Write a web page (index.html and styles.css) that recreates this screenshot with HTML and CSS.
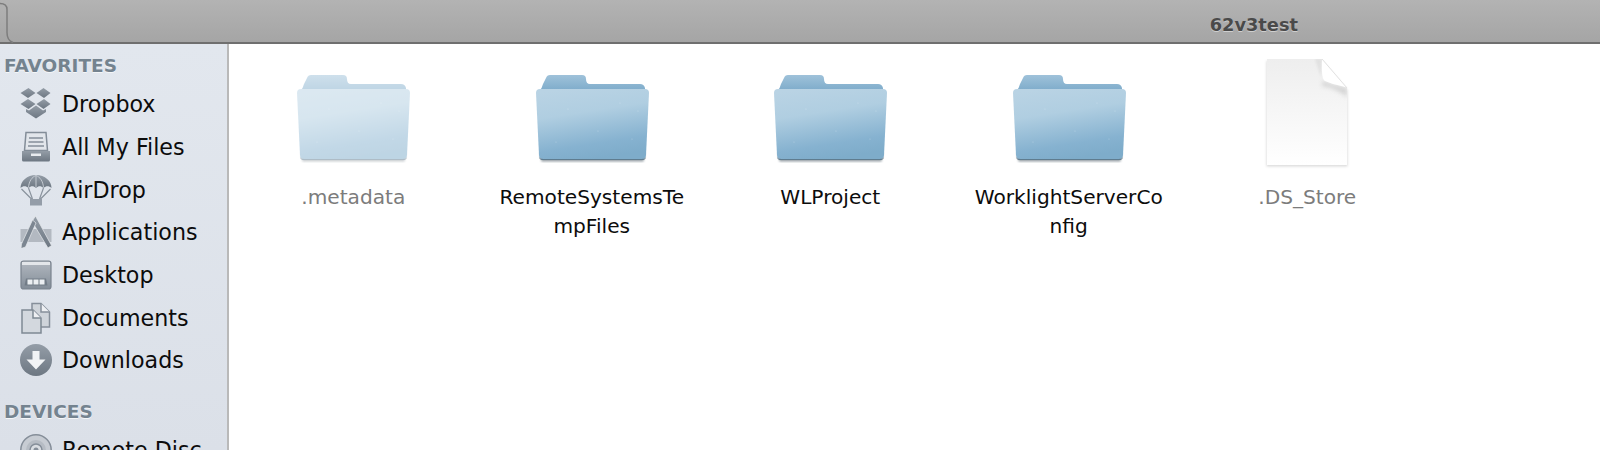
FILE: index.html
```html
<!DOCTYPE html>
<html lang="en">
<head>
<meta charset="utf-8">
<title>62v3test</title>
<link rel="stylesheet" href="styles.css">
</head>
<body>
<svg class="defs" width="0" height="0" aria-hidden="true">
  <defs>
    <linearGradient id="g-icon" x1="0" y1="0" x2="0" y2="1"><stop offset="0" stop-color="#949da7"/><stop offset="1" stop-color="#6d7782"/></linearGradient>
    <linearGradient id="g-desk" x1="0" y1="0" x2="0" y2="1"><stop offset="0" stop-color="#b2b8c0"/><stop offset="1" stop-color="#838d98"/></linearGradient>
    <linearGradient id="g-front" x1="0.25" y1="0" x2="0.5" y2="1"><stop offset="0" stop-color="#b9d3e4"/><stop offset="0.35" stop-color="#b0cee1"/><stop offset="0.8" stop-color="#86b2d0"/><stop offset="1" stop-color="#7eacca"/></linearGradient>
    <linearGradient id="g-tab" x1="0" y1="0" x2="0" y2="1"><stop offset="0" stop-color="#9fc2da"/><stop offset="1" stop-color="#7dabca"/></linearGradient>
    <linearGradient id="g-doc" x1="0" y1="0" x2="0" y2="1"><stop offset="0" stop-color="#eeeeee"/><stop offset="0.6" stop-color="#f8f8f8"/><stop offset="1" stop-color="#ffffff"/></linearGradient>
    <filter id="f-soft" x="-10%" y="-10%" width="120%" height="120%"><feGaussianBlur stdDeviation="1"/></filter>
    <filter id="f-fold" x="-30%" y="-30%" width="160%" height="160%"><feGaussianBlur stdDeviation="2.200"/></filter>
    <clipPath id="c-doc"><path d="M24 10h55l25 29v77H24z"/></clipPath>
    <symbol id="folder" viewBox="0 0 128 128">
      <path d="M12 41q2-2 3-6l3-6q1-3 4-3h32q4 0 4 4q0 5 4 5h50q4 0 5 4v3z" fill="url(#g-tab)"/>
      <path d="M12 104h105l-1.500 8.500H13.500z" fill="#4e5d68" opacity=".6" filter="url(#f-soft)"/>
      <path d="M8 44q0-4 4-4h105q4 0 4 4l-3 62q-.2 4-4 4H15q-3.800 0-4-4z" fill="url(#g-front)"/>
      <path d="M11.200 107.500q.5 2.500 4 2.500h98.600q3.500 0 4-2.500l-.2 1.500q-.4 2-3.800 2H15.200q-3.400 0-3.800-2z" fill="#5f7c8f"/>
      <g fill="#fff" opacity=".3"><circle cx="40" cy="60" r=".6"/><circle cx="92" cy="54" r=".6"/><circle cx="70" cy="82" r=".6"/><circle cx="104" cy="90" r=".6"/><circle cx="28" cy="93" r=".6"/><circle cx="110" cy="62" r=".6"/></g>
    </symbol>
  </defs>
</svg>
<div class="window">
  <header class="titlebar">
    <svg class="tab-corner" width="14" height="44" viewBox="0 0 14 44" aria-hidden="true">
      <path d="M0 3.500q7 0 7 6v23q0 8 6 10" fill="none" stroke="#7d7d7d" stroke-width="1.500"/>
    </svg>
    <h1 class="title">62v3test</h1>
  </header>
  <div class="body">
    <nav class="sidebar">
      <h2 class="group-heading">FAVORITES</h2>
      <ul class="group">
        <li class="row">
          <svg class="side-icon" viewBox="0 0 32 32" aria-hidden="true"><g fill="url(#g-icon)"><polygon points="8.500,0 15.500,5 8,10 0.500,5"/><polygon points="23.500,0 30.500,5 24,10 16.500,5"/><polygon points="8,11 15.500,16 8.500,21 0.500,16"/><polygon points="24,11 30.500,16 23.500,21 16.500,16"/><polygon points="16,17.500 23,22.500 26,21 26,24 16,30.500 6,24 6,21 9,22.500"/></g></svg>
          <span class="label">Dropbox</span>
        </li>
        <li class="row">
          <svg class="side-icon" viewBox="0 0 32 32" aria-hidden="true"><path d="M6 1.500h20l1.500 18h-23z" fill="#e2e6eb" stroke="#838d98" stroke-width="1.500"/><path d="M9 7h14M8.500 11h15M8 15h16" stroke="#858f9a" stroke-width="1.300"/><path d="M2 20h28v9q0 1.500-1.500 1.500h-25q-1.500 0-1.500-1.500z" fill="url(#g-icon)"/><rect x="11" y="22.500" width="10" height="2.500" fill="#e8ebef"/></svg>
          <span class="label">All My Files</span>
        </li>
        <li class="row">
          <svg class="side-icon" viewBox="0 0 32 32" aria-hidden="true"><path d="M16 1C7 1 0.500 7 0.500 14 3 11.500 6 11.500 8.500 14 11 11.500 13.500 11.500 16 14 18.500 11.500 21 11.500 23.500 14 26 11.500 29 11.500 31.500 14 31.500 7 25 1 16 1z" fill="url(#g-icon)"/><path d="M8.500 13.500C9 7 12 3 16 1.500c4 1.500 7 5.500 7.500 12M16 1.500v12" fill="none" stroke="#c4cad1" stroke-width="1"/><path d="M1.500 15L11.500 25M8.500 14l4 11M23.500 14l-4 11M30.500 15L20.500 25" stroke="#8a939e" stroke-width="1.200"/><rect x="10" y="25" width="12" height="6.500" fill="#949da8"/></svg>
          <span class="label">AirDrop</span>
        </li>
        <li class="row">
          <svg class="side-icon" viewBox="0 0 32 32" aria-hidden="true"><rect x="0.500" y="13" width="31" height="13" fill="#b3b9c1"/><path d="M15.500 0l16 29.500-3.500 2.500L12 5.500z" fill="url(#g-icon)" stroke="#e6e9ed" stroke-width=".7"/><path d="M16 7L5.500 31 1 32.500 1.500 28 12.500 4z" fill="#7c8691" stroke="#e6e9ed" stroke-width=".7"/></svg>
          <span class="label">Applications</span>
        </li>
        <li class="row">
          <svg class="side-icon" viewBox="0 0 32 32" aria-hidden="true"><rect x="1" y="2" width="30" height="28" rx="2.500" fill="url(#g-desk)" stroke="#7a838e" stroke-width="1.200"/><rect x="2" y="3" width="28" height="3" fill="#e3e6ea"/><path d="M4.500 26.500l1.500-7h20l1.500 7z" fill="#727c87"/><rect x="7.500" y="20.500" width="5" height="5" fill="#eceff2"/><rect x="13.500" y="20.500" width="5" height="5" fill="#eceff2"/><rect x="19.500" y="20.500" width="5" height="5" fill="#eceff2"/></svg>
          <span class="label">Desktop</span>
        </li>
        <li class="row">
          <svg class="side-icon" viewBox="0 0 32 32" aria-hidden="true"><path d="M12 1.500h9l8.500 8.500v15H12z" fill="#cfd4da" stroke="#868f9a" stroke-width="1.500"/><path d="M21 1.500V10h8.500" fill="#eef0f3" stroke="#868f9a" stroke-width="1.500"/><path d="M2 8h11l8 8v15H2z" fill="#d3d8de" stroke="#7f8994" stroke-width="1.500"/><path d="M13 8v8h8" fill="#eef0f3" stroke="#7f8994" stroke-width="1.500"/></svg>
          <span class="label">Documents</span>
        </li>
        <li class="row">
          <svg class="side-icon" viewBox="0 0 32 32" aria-hidden="true"><circle cx="16" cy="16" r="16" fill="url(#g-icon)"/><path d="M12.500 7h7v8.500h6L16 25.500 6.500 15.500h6z" fill="#f1f3f5"/></svg>
          <span class="label">Downloads</span>
        </li>
      </ul>
      <h2 class="group-heading devices">DEVICES</h2>
      <ul class="group">
        <li class="row">
          <svg class="side-icon" viewBox="0 0 32 32" aria-hidden="true"><circle cx="16" cy="16" r="15.200" fill="#c7ccd3" stroke="#858e99" stroke-width="1.500"/><circle cx="16" cy="16" r="10" fill="#b6bcc4"/><circle cx="16" cy="16" r="6" fill="#d9dde2" stroke="#858e99" stroke-width="1.500"/><circle cx="16" cy="16" r="2.500" fill="#858e99"/></svg>
          <span class="label">Remote Disc</span>
        </li>
      </ul>
    </nav>
    <main class="files">
      <figure class="item hidden">
        <svg class="item-icon" viewBox="0 0 128 128" aria-hidden="true"><use href="#folder"/></svg>
        <figcaption class="name">.metadata</figcaption>
      </figure>
      <figure class="item">
        <svg class="item-icon" viewBox="0 0 128 128" aria-hidden="true"><use href="#folder"/></svg>
        <figcaption class="name">RemoteSystemsTe<br>mpFiles</figcaption>
      </figure>
      <figure class="item">
        <svg class="item-icon" viewBox="0 0 128 128" aria-hidden="true"><use href="#folder"/></svg>
        <figcaption class="name">WLProject</figcaption>
      </figure>
      <figure class="item">
        <svg class="item-icon" viewBox="0 0 128 128" aria-hidden="true"><use href="#folder"/></svg>
        <figcaption class="name">WorklightServerCo<br>nfig</figcaption>
      </figure>
      <figure class="item dotfile">
        <svg class="item-icon" viewBox="0 0 128 128" aria-hidden="true">
          <path d="M23.500 12h56l25 29v76.500h-81z" fill="#8a8a8a" opacity=".3" filter="url(#f-soft)"/>
          <path d="M24 10h55l25 29v77H24z" fill="url(#g-doc)"/>
          <g clip-path="url(#c-doc)">
            <path d="M80 32q5 3 24 7v9Q92 38 79 37z" fill="#bdbdbd" opacity=".6" filter="url(#f-fold)"/>
            <path d="M72 10h7l-1 18z" fill="#d4d4d4" opacity=".5" filter="url(#f-soft)"/>
          </g>
          <path d="M79 10q-1 20 3 22q5 2.500 22 6.500z" fill="#ffffff"/>
          <path d="M79 10l25 29" fill="none" stroke="#e2e2e2" stroke-width="1"/>
        </svg>
        <figcaption class="name">.DS_Store</figcaption>
      </figure>
    </main>
  </div>
</div>
</body>
</html>
```
FILE: styles.css
```css
* { box-sizing: border-box; }
html, body { margin: 0; padding: 0; height: 100%; overflow: hidden; background: #fff; }
body { font-family: "DejaVu Sans", "Liberation Sans", sans-serif; }
.defs { position: absolute; }
.window { display: flex; flex-direction: column; height: 450px; }

.titlebar {
  display: flex;
  align-items: flex-start;
  justify-content: flex-end;
  height: 44px;
  flex: none;
  position: relative;
  padding-right: 302px;
  background: linear-gradient(#b3b3b3, #a5a5a5);
  border-bottom: 2px solid #6f6f6f;
}
.tab-corner { position: absolute; left: 0; top: 0; }
.title {
  margin: 0;
  padding-top: 15px;
  font-size: 17.8px;
  line-height: 20px;
  font-weight: bold;
  color: #4a4a4a;
  text-shadow: 0 1px 0 #cfcfcf;
}

.body { display: flex; flex: 1; min-height: 0; }
.sidebar {
  width: 229px;
  flex: none;
  padding: 11px 0 0 0;
  background: linear-gradient(#e2e7ee, #dbe0e8);
  border-right: 2px solid #b9b9b9;
  overflow: hidden;
}
.group-heading {
  margin: 0 0 6px;
  padding-left: 4px;
  height: 22px;
  font-size: 18.5px;
  line-height: 22px;
  font-weight: bold;
  color: #74838f;
  text-shadow: 0 1px 0 #f4f6f8;
}
.devices { margin-top: 19px; }
.group { list-style: none; margin: 0; padding: 0; }
.row {
  display: flex;
  align-items: center;
  gap: 10px;
  height: 42.67px;
  padding-left: 20px;
}
.side-icon { width: 32px; height: 32px; flex: none; }
.label { font-size: 22.2px; line-height: 30px; color: #0c0c0c; white-space: nowrap; }

.files {
  flex: 1;
  display: grid;
  grid-template-columns: repeat(5, 238.5px);
  align-content: start;
  padding: 5px 0 0 5px;
  background: #fff;
}
.item { margin: 0; display: flex; flex-direction: column; align-items: center; }
.item-icon { width: 128px; height: 128px; flex: none; }
.hidden .item-icon { opacity: .5; }
.name {
  margin-top: 6px;
  font-size: 20.15px;
  line-height: 29px;
  text-align: center;
  color: #0c0c0c;
  white-space: nowrap;
}
.hidden .name, .dotfile .name { color: #7c7c7c; }
```
